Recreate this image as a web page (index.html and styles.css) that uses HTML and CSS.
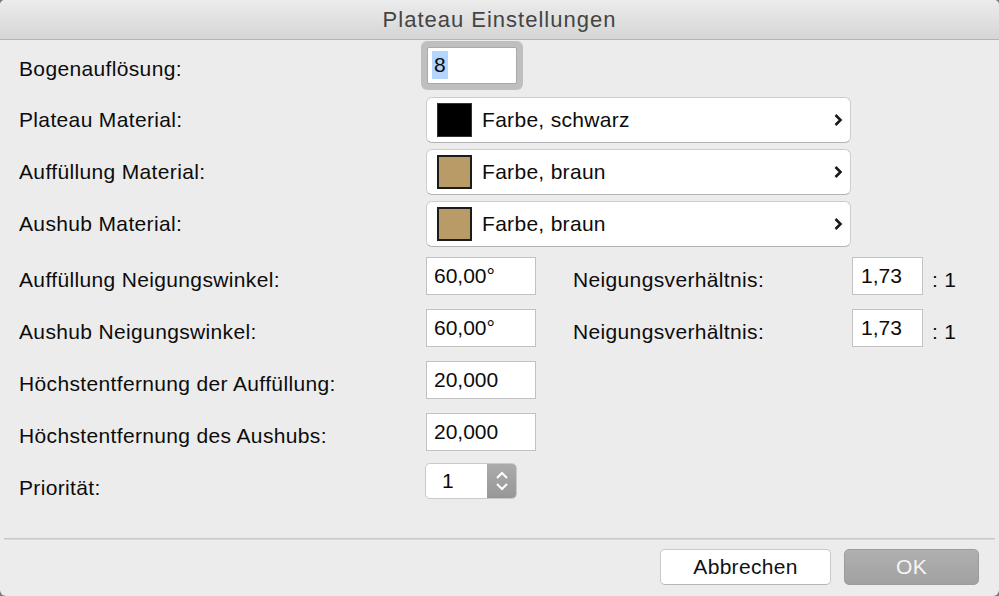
FILE: index.html
```html
<!DOCTYPE html>
<html lang="de">
<head>
    <meta charset="UTF-8">
    <meta name="viewport" content="width=device-width, initial-scale=1.0">
    <title>Plateau Einstellungen</title>
    <link rel="stylesheet" href="styles.css">
</head>
<body>
    <div id="dialog">
        <div class="titlebar">Plateau Einstellungen</div>

        <div class="form">
            <div class="row first">
                <span class="label">Bogenauflösung:</span>
                <div class="field focused"><span class="sel">8</span></div>
            </div>

            <div class="row">
                <span class="label flat">Plateau Material:</span>
                <div class="popup">
                    <span class="swatch black"></span>
                    <span class="popup-text">Farbe, schwarz</span>
                    <svg class="chevron" width="10" height="14" viewBox="0 0 10 14"><path d="M2.5 2 L7.5 7 L2.5 12" fill="none" stroke="#1a1a1a" stroke-width="2.6"/></svg>
                </div>
            </div>
            <div class="row">
                <span class="label flat">Auffüllung Material:</span>
                <div class="popup">
                    <span class="swatch brown"></span>
                    <span class="popup-text">Farbe, braun</span>
                    <svg class="chevron" width="10" height="14" viewBox="0 0 10 14"><path d="M2.5 2 L7.5 7 L2.5 12" fill="none" stroke="#1a1a1a" stroke-width="2.6"/></svg>
                </div>
            </div>
            <div class="row">
                <span class="label flat">Aushub Material:</span>
                <div class="popup">
                    <span class="swatch brown"></span>
                    <span class="popup-text">Farbe, braun</span>
                    <svg class="chevron" width="10" height="14" viewBox="0 0 10 14"><path d="M2.5 2 L7.5 7 L2.5 12" fill="none" stroke="#1a1a1a" stroke-width="2.6"/></svg>
                </div>
            </div>

            <div class="row">
                <span class="label">Auffüllung Neigungswinkel:</span>
                <div class="field">60,00°</div>
                <span class="label ratio-label">Neigungsverhältnis:</span>
                <div class="field small">1,73</div>
                <span class="label ratio">: 1</span>
            </div>
            <div class="row">
                <span class="label">Aushub Neigungswinkel:</span>
                <div class="field">60,00°</div>
                <span class="label ratio-label">Neigungsverhältnis:</span>
                <div class="field small">1,73</div>
                <span class="label ratio">: 1</span>
            </div>
            <div class="row">
                <span class="label">Höchstentfernung der Auffüllung:</span>
                <div class="field">20,000</div>
            </div>
            <div class="row">
                <span class="label">Höchstentfernung des Aushubs:</span>
                <div class="field">20,000</div>
            </div>
            <div class="row last">
                <span class="label">Priorität:</span>
                <div class="stepper">
                    <span class="stepper-value">1</span>
                    <span class="stepper-arrows">
                        <svg width="14" height="8" viewBox="0 0 14 8"><path d="M2 7 L7 2 L12 7" fill="none" stroke="#fff" stroke-width="2"/></svg>
                        <svg width="14" height="8" viewBox="0 0 14 8"><path d="M2 1 L7 6 L12 1" fill="none" stroke="#fff" stroke-width="2"/></svg>
                    </span>
                </div>
            </div>
        </div>

        <div class="footer">
            <button class="btn">Abbrechen</button>
            <button class="btn default">OK</button>
        </div>
    </div>
</body>
</html>
```

FILE: styles.css
```css
/* Grundlayout */
html {
    background-color: #7a7a7a;
}

body {
    margin: 0;
    padding: 0;
    font-family: "Liberation Sans", Arial, sans-serif;
    color: #0c0c0c;
}

#dialog {
    height: 596px;
    background-color: #ececec;
    border-radius: 5px 5px 6px 6px;
    overflow: hidden;
    display: flex;
    flex-direction: column;
}

.titlebar {
    height: 39px;
    border-bottom: 1px solid #b4b4b4;
    background: linear-gradient(#ececec, #d5d5d5);
    color: #444;
    font-size: 22px;
    letter-spacing: 1px;
    display: flex;
    align-items: center;
    justify-content: center;
}

.form {
    padding: 0 19px;
}

.row {
    height: 52px;
    display: flex;
    align-items: center;
}

.row.first {
    height: 50px;
    margin-bottom: 4px;
}

.label {
    font-size: 21px;
    letter-spacing: 0.35px;
    width: 407px;
    flex-shrink: 0;
    padding-top: 7px;
}

.label.flat {
    padding-top: 0;
}

.field {
    box-sizing: border-box;
    width: 110px;
    height: 38px;
    background-color: #fff;
    border: 1px solid #c2c2c2;
    font-size: 21px;
    padding-left: 7px;
    display: flex;
    align-items: center;
}

.field.focused {
    width: 90px;
    height: 37px;
    margin-left: 1px;
    border: 1px solid #a9a9a9;
    border-radius: 2px;
    box-shadow: 0 0 0 6px #bfbfbf;
    padding-left: 4px;
}

.sel {
    background-color: #b4d5fe;
    padding: 2px 2px;
    line-height: 24px;
}

.field.small {
    width: 71px;
    padding-left: 8px;
}

.ratio-label {
    width: 279px;
    margin-left: 37px;
}

.ratio {
    width: auto;
    margin-left: 9px;
}

.popup {
    box-sizing: border-box;
    width: 425px;
    height: 46px;
    background-color: #fff;
    border: 1px solid #cdcdcd;
    border-bottom-color: #b3b3b3;
    border-radius: 6px;
    display: flex;
    align-items: center;
    padding-left: 10px;
}

.swatch {
    box-sizing: border-box;
    width: 35px;
    height: 34px;
    margin-right: 10px;
    border: 1px solid #333;
}

.swatch.black {
    background-color: #000;
}

.swatch.brown {
    background-color: #b99b68;
    border: 2px solid #1c1c1c;
}

.popup-text {
    flex: 1;
    font-size: 21px;
    letter-spacing: 0.3px;
}

.chevron {
    margin-right: 7px;
}

.row.last .label {
    padding-top: 8px;
}

.stepper {
    box-sizing: border-box;
    width: 92px;
    height: 36px;
    margin-top: -6px;
    margin-left: -1px;
    display: flex;
    background-color: #fff;
    border: 1px solid #c9c9c9;
    border-radius: 5px;
    overflow: hidden;
}

.stepper-value {
    width: 61px;
    font-size: 21px;
    padding-left: 16px;
    box-sizing: border-box;
    display: flex;
    align-items: center;
}

.stepper-arrows {
    flex: 1;
    background: linear-gradient(#ababab, #979797);
    display: flex;
    flex-direction: column;
    align-items: center;
    justify-content: center;
    gap: 4px;
}

.footer {
    margin: 28px 4px 0;
    border-top: 1px solid #c8c8c8;
    box-shadow: inset 0 1px 0 #dadada;
    padding: 10px 16px 0 0;
    display: flex;
    justify-content: flex-end;
    gap: 13px;
}

.btn {
    box-sizing: border-box;
    width: 171px;
    height: 36px;
    font-family: "Liberation Sans", Arial, sans-serif;
    font-size: 21px;
    letter-spacing: 0.3px;
    color: #111;
    background-color: #fff;
    border: 1px solid #c9c9c9;
    border-bottom-color: #b5b5b5;
    border-radius: 5px;
    padding: 0;
}

.btn.default {
    width: 135px;
    color: #f5f5f5;
    background: linear-gradient(#b0b0b0, #a1a1a1);
    border-color: #9c9c9c;
}
```
